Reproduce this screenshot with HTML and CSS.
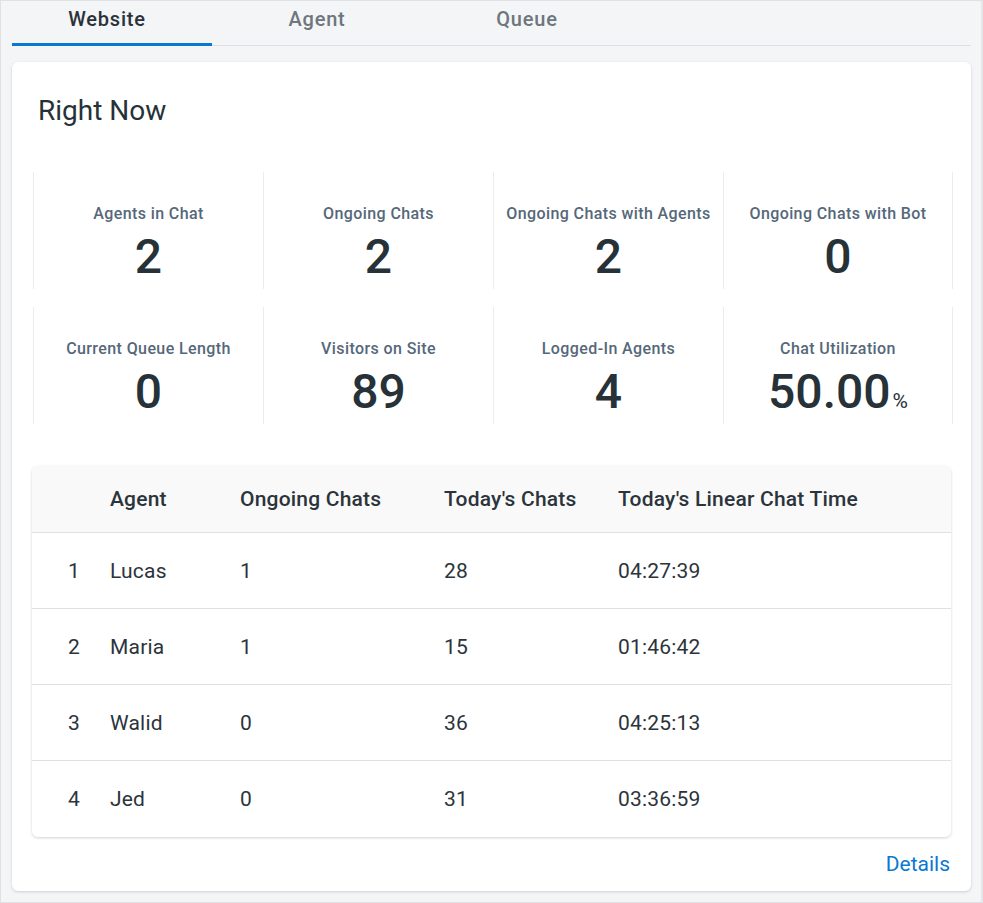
FILE: index.html
```html
<!DOCTYPE html>
<html>
<head>
<meta charset="utf-8">
<link rel="stylesheet" href="styles.css">
</head>
<body>
<div class="frame">
  <div class="tabs">
    <div class="tab active">Website</div>
    <div class="tab">Agent</div>
    <div class="tab">Queue</div>
  </div>
  <div class="card">
    <h2 class="title">Right Now</h2>
    <div class="stats">
      <div class="stat"><div class="label">Agents in Chat</div><div class="value">2</div></div>
      <div class="stat"><div class="label">Ongoing Chats</div><div class="value">2</div></div>
      <div class="stat"><div class="label">Ongoing Chats with Agents</div><div class="value">2</div></div>
      <div class="stat"><div class="label">Ongoing Chats with Bot</div><div class="value">0</div></div>
      <div class="stat"><div class="label">Current Queue Length</div><div class="value">0</div></div>
      <div class="stat"><div class="label">Visitors on Site</div><div class="value">89</div></div>
      <div class="stat"><div class="label">Logged-In Agents</div><div class="value">4</div></div>
      <div class="stat"><div class="label">Chat Utilization</div><div class="value">50.00<span class="pct">%</span></div></div>
    </div>
    <div class="table-card">
      <table class="agents">
        <thead>
          <tr><th class="c-num"></th><th class="c-agent">Agent</th><th class="c-ongoing">Ongoing Chats</th><th class="c-today">Today's Chats</th><th>Today's Linear Chat Time</th></tr>
        </thead>
        <tbody>
          <tr><td class="c-num">1</td><td>Lucas</td><td>1</td><td>28</td><td>04:27:39</td></tr>
          <tr><td class="c-num">2</td><td>Maria</td><td>1</td><td>15</td><td>01:46:42</td></tr>
          <tr><td class="c-num">3</td><td>Walid</td><td>0</td><td>36</td><td>04:25:13</td></tr>
          <tr><td class="c-num">4</td><td>Jed</td><td>0</td><td>31</td><td>03:36:59</td></tr>
        </tbody>
      </table>
    </div>
    <div class="footer"><a class="details" href="#">Details</a></div>
  </div>
</div>
</body>
</html>
```
FILE: styles.css
```css
html, body {
  margin: 0;
  padding: 0;
  background: #f3f4f6;
}
body {
  font-family: Roboto, "Liberation Sans", sans-serif;
  color: #263238;
}
.frame {
  box-sizing: border-box;
  width: 983px;
  height: 903px;
  border: 1px solid #dfe1e4;
  border-right: 2px solid #e4e6e9;
  background: #f4f5f7;
  padding: 0 10px 0 11px;
}
.tabs {
  display: flex;
  height: 44px;
  border-bottom: 1px solid #dcdfe3;
}
.tab {
  position: relative;
  width: 190px;
  padding-right: 20px;
  text-align: center;
  font-size: 20px;
  line-height: 36px;
  letter-spacing: 0.8px;
  font-weight: 500;
  color: #6e767e;
}
.tab.active {
  color: #2b3238;
}
.tab.active::after {
  content: "";
  position: absolute;
  left: 0;
  bottom: -1px;
  width: 200px;
  height: 3px;
  background: #0a78d2;
}
.card {
  margin-top: 16px;
  background: #fff;
  border-radius: 6px;
  box-shadow: 0 1px 3px rgba(0, 0, 0, 0.16);
  padding: 20px 20px 14px 20px;
  height: 829px;
  box-sizing: border-box;
}
.title {
  margin: 12px 0 0 6px;
  font-size: 28px;
  font-weight: 400;
  line-height: 34px;
  color: #263238;
}
.stats {
  margin: 44px 0 0 1px;
  width: 920px;
  display: grid;
  grid-template-columns: repeat(4, 1fr);
  row-gap: 18px;
}
.stat {
  height: 117px;
  border-left: 1px solid #ececec;
  text-align: center;
  box-sizing: border-box;
  padding-top: 31px;
}
.stat:nth-child(4n) {
  border-right: 1px solid #ececec;
}
.label {
  font-size: 16px;
  font-weight: 500;
  line-height: 22px;
  letter-spacing: 0.4px;
  color: #55687a;
}
.value {
  font-size: 48px;
  font-weight: 500;
  line-height: 52px;
  margin-top: 6px;
  color: #263238;
}
.pct {
  font-size: 21px;
  font-weight: 400;
  margin-left: 2px;
}
.table-card {
  margin-top: 42px;
  border-radius: 6px;
  box-shadow: 0 1px 3px rgba(0, 0, 0, 0.18);
  overflow: hidden;
}
.agents {
  width: 100%;
  border-collapse: collapse;
  font-size: 21px;
  letter-spacing: 0.2px;
  color: #2c343b;
}
.agents th {
  background: #f9f9f9;
  font-weight: 500;
  text-align: left;
  height: 66px;
  padding: 0;
  border-bottom: 1px solid #e0e0e0;
}
.agents td {
  height: 75px;
  padding: 0;
  border-bottom: 1px solid #e0e0e0;
}
.agents tbody tr:last-child td {
  border-bottom: none;
  height: 76px;
}
.c-num {
  width: 42px;
  padding-left: 36px !important;
}
.c-agent { width: 130px; }
.c-ongoing { width: 204px; }
.c-today { width: 174px; }
.footer {
  display: flex;
  justify-content: flex-end;
  margin-top: 14px;
}
.details {
  color: #0a78d2;
  text-decoration: none;
  font-size: 21px;
  line-height: 26px;
  margin-right: 1px;
}
```
